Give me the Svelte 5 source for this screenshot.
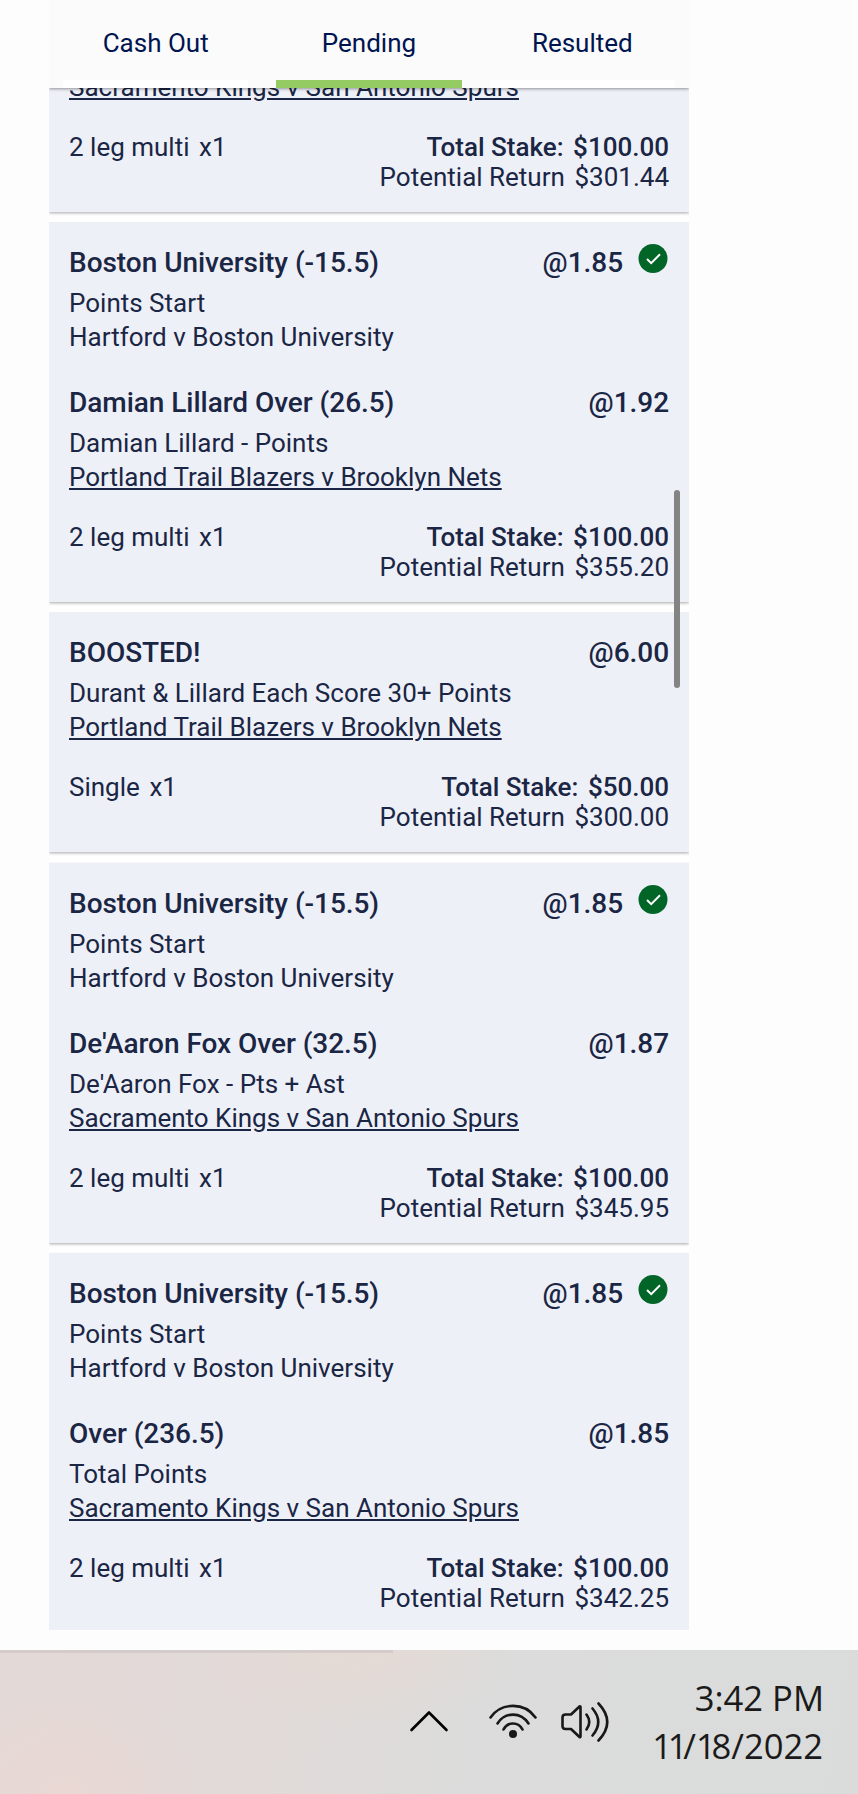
<script>
  const tabs = ['Cash Out', 'Pending', 'Resulted'];
  let active = $state('Pending');

  const boston = {
    title: 'Boston University (-15.5)',
    odds: '1.85',
    won: true,
    market: 'Points Start',
    match: 'Hartford v Boston University'
  };

  const bets = [
    {
      legs: [{ match: 'Sacramento Kings v San Antonio Spurs', live: true }],
      type: '2 leg multi',
      stake: '$100.00',
      payout: '$301.44'
    },
    {
      legs: [
        boston,
        { title: 'Damian Lillard Over (26.5)', odds: '1.92', market: 'Damian Lillard - Points', match: 'Portland Trail Blazers v Brooklyn Nets', live: true }
      ],
      type: '2 leg multi',
      stake: '$100.00',
      payout: '$355.20'
    },
    {
      legs: [
        { title: 'BOOSTED!', odds: '6.00', market: 'Durant & Lillard Each Score 30+ Points', match: 'Portland Trail Blazers v Brooklyn Nets', live: true }
      ],
      type: 'Single',
      stake: '$50.00',
      payout: '$300.00'
    },
    {
      legs: [
        boston,
        { title: "De'Aaron Fox Over (32.5)", odds: '1.87', market: "De'Aaron Fox - Pts + Ast", match: 'Sacramento Kings v San Antonio Spurs', live: true }
      ],
      type: '2 leg multi',
      stake: '$100.00',
      payout: '$345.95'
    },
    {
      legs: [
        boston,
        { title: 'Over (236.5)', odds: '1.85', market: 'Total Points', match: 'Sacramento Kings v San Antonio Spurs', live: true }
      ],
      type: '2 leg multi',
      stake: '$100.00',
      payout: '$342.25'
    }
  ];
</script>

<div class="screen">
  <main class="panel">
    <nav class="tabs">
      {#each tabs as tab}
        <button type="button" class="tab" class:tab--active={tab === active} onclick={() => (active = tab)}>
          {tab}
        </button>
      {/each}
    </nav>

    <div class="scroller">
      <div class="list">
        {#each bets as bet}
          <article class="bet">
            {#each bet.legs as leg}
              <section class="leg">
                {#if leg.title}
                  <div class="leg__head">
                    <span>{leg.title}</span>
                    <span class="leg__odds">@{leg.odds}</span>
                    {#if leg.won}
                      <svg class="leg__check" viewBox="0 0 32 32">
                        <circle cx="16" cy="16.5" r="14.5" fill="#006527" />
                        <path d="M10 17l4.200 4.200L23 12.200" fill="none" stroke="#fff" stroke-width="2" />
                      </svg>
                    {/if}
                  </div>
                  <div>{leg.market}</div>
                {/if}
                <div><span class:live={leg.live}>{leg.match}</span></div>
              </section>
            {/each}
            <footer class="bet__foot">
              <div><span>{bet.type}</span><span class="value">x1</span></div>
              <div class="totals">
                <div class="stake"><span>Total Stake:</span><span class="value">{bet.stake}</span></div>
                <div><span>Potential Return</span><span class="value">{bet.payout}</span></div>
              </div>
            </footer>
          </article>
        {/each}
      </div>
      <div class="thumb"></div>
    </div>
  </main>

  <div class="taskbar">
    <svg class="chevron" width="48" height="48" viewBox="0 0 48 48">
      <path d="M6.500 32L24 14.500L41.500 32" />
    </svg>
    <svg class="wifi" width="48" height="48" viewBox="0 0 48 48">
      <path d="M1.500 19.500C12.500 4 35.500 4 46.500 19.500M8.500 25.500C16 13.600 32 13.600 39.500 25.500M14.500 31.500C18.500 23.500 29.500 23.500 33.500 31.500" />
      <circle cx="24" cy="36" r="4" />
    </svg>
    <svg class="volume" width="52" height="48" viewBox="0 0 52 48">
      <path d="M5.500 16.500H11L19.500 8.500Q20.500 8 20.500 9V38.500Q20.500 39.500 19.500 39L11 31H5.500Q2.500 31 2.500 28V19.500Q2.500 16.500 5.500 16.500Z" />
      <path d="M26.500 16.500Q32 24 26.500 31.500M32.500 10.500Q44 24 32.500 37.500M38.500 5.500Q56 24 38.500 42.500" />
    </svg>
    <div class="clock">
      <div>3:42 PM</div>
      <div class="date"><span class="ones">11</span>/<span class="ones">1</span>8/2022</div>
    </div>
  </div>
</div>

<style>
  :global(body) {
    margin: 0;
    background: #fdfdfd;
  }

  .screen {
    width: 858px;
    height: 1794px;
    display: flex;
    flex-direction: column;
    justify-content: space-between;
    overflow: hidden;
    font-family: Roboto, 'Liberation Sans', sans-serif;
    font-size: 26px;
    line-height: 34px;
    color: #1a2644;
  }

  .panel {
    width: 640px;
    height: 1630px;
    margin-left: 49px;
    display: flex;
    flex-direction: column;
  }

  .tabs {
    position: relative;
    z-index: 1;
    display: flex;
    flex: 0 0 88px;
    background: #fbfbfb;
    box-shadow: 0 1px 3px rgba(0, 0, 0, 0.4);
    clip-path: inset(0 0 -6px 0);
  }

  .tab {
    flex: 1;
    margin: 0 14px;
    padding: 6px 0 0;
    border: none;
    border-bottom: 8px solid #fff;
    background: none;
    font: inherit;
    line-height: 74px;
    color: #001450;
    cursor: pointer;
  }

  .tab--active {
    border-bottom-color: #94cb62;
  }

  .scroller {
    position: relative;
    flex: 1;
    min-height: 0;
    overflow: hidden;
    background: #fff;
  }

  .list {
    display: flex;
    flex-direction: column;
    gap: 10.2px;
    margin-top: -38px;
  }

  .bet {
    display: flex;
    flex-direction: column;
    gap: 28px;
    padding: 20px;
    background: #eef0f8;
    box-shadow: 0 1px 3px rgba(0, 0, 0, 0.35);
    clip-path: inset(0 0 -6px 0);
  }

  .leg__head {
    display: flex;
    margin-bottom: 2px;
    font-size: 28px;
    font-weight: 500;
    line-height: 42px;
    letter-spacing: -0.04px;
  }

  .leg__odds {
    margin-left: auto;
  }

  .leg__check {
    width: 32px;
    height: 32px;
    margin-left: 14px;
  }

  .live {
    text-decoration: underline;
  }

  .bet__foot {
    display: flex;
    justify-content: space-between;
    line-height: 30px;
  }

  .totals {
    text-align: right;
  }

  .stake {
    font-weight: 500;
  }

  .value {
    margin-left: 9.6px;
  }

  .thumb {
    position: absolute;
    top: 402px;
    right: 9px;
    width: 6px;
    height: 198px;
    border-radius: 3px;
    background: #848484;
  }

  .taskbar {
    height: 144px;
    box-sizing: border-box;
    display: flex;
    align-items: center;
    justify-content: flex-end;
    padding-right: 34px;
    background:
      linear-gradient(#d4cccb, #d4cccb) 0 0 / 393px 3px no-repeat,
      radial-gradient(ellipse 130px 110px at 65px 144px, #ead8d4, transparent),
      radial-gradient(ellipse 160px 80px at 360px 0, #e5dad5, transparent),
      linear-gradient(100deg, #e3d9d7 0%, #e1dad8 32%, #dbdcdb 55%, #dadcdb 100%);
  }

  .taskbar svg {
    fill: none;
    stroke: #181818;
    stroke-width: 2.6;
    stroke-linecap: round;
    stroke-linejoin: round;
  }

  .taskbar .chevron {
    stroke: #000;
    margin-right: 36px;
  }

  .wifi {
    margin-right: 23px;
  }

  .taskbar .wifi circle {
    fill: #181818;
    stroke: none;
  }

  .volume {
    margin-right: 12px;
  }

  .clock {
    width: 200px;
    padding-bottom: 1px;
    font-family: 'Open Sans', 'Noto Sans', sans-serif;
    font-size: 34.6px;
    line-height: 48px;
    text-align: right;
    color: #1a1a1a;
  }

  .date {
    margin-right: 1px;
  }

  .ones {
    letter-spacing: -4.3px;
  }
</style>
